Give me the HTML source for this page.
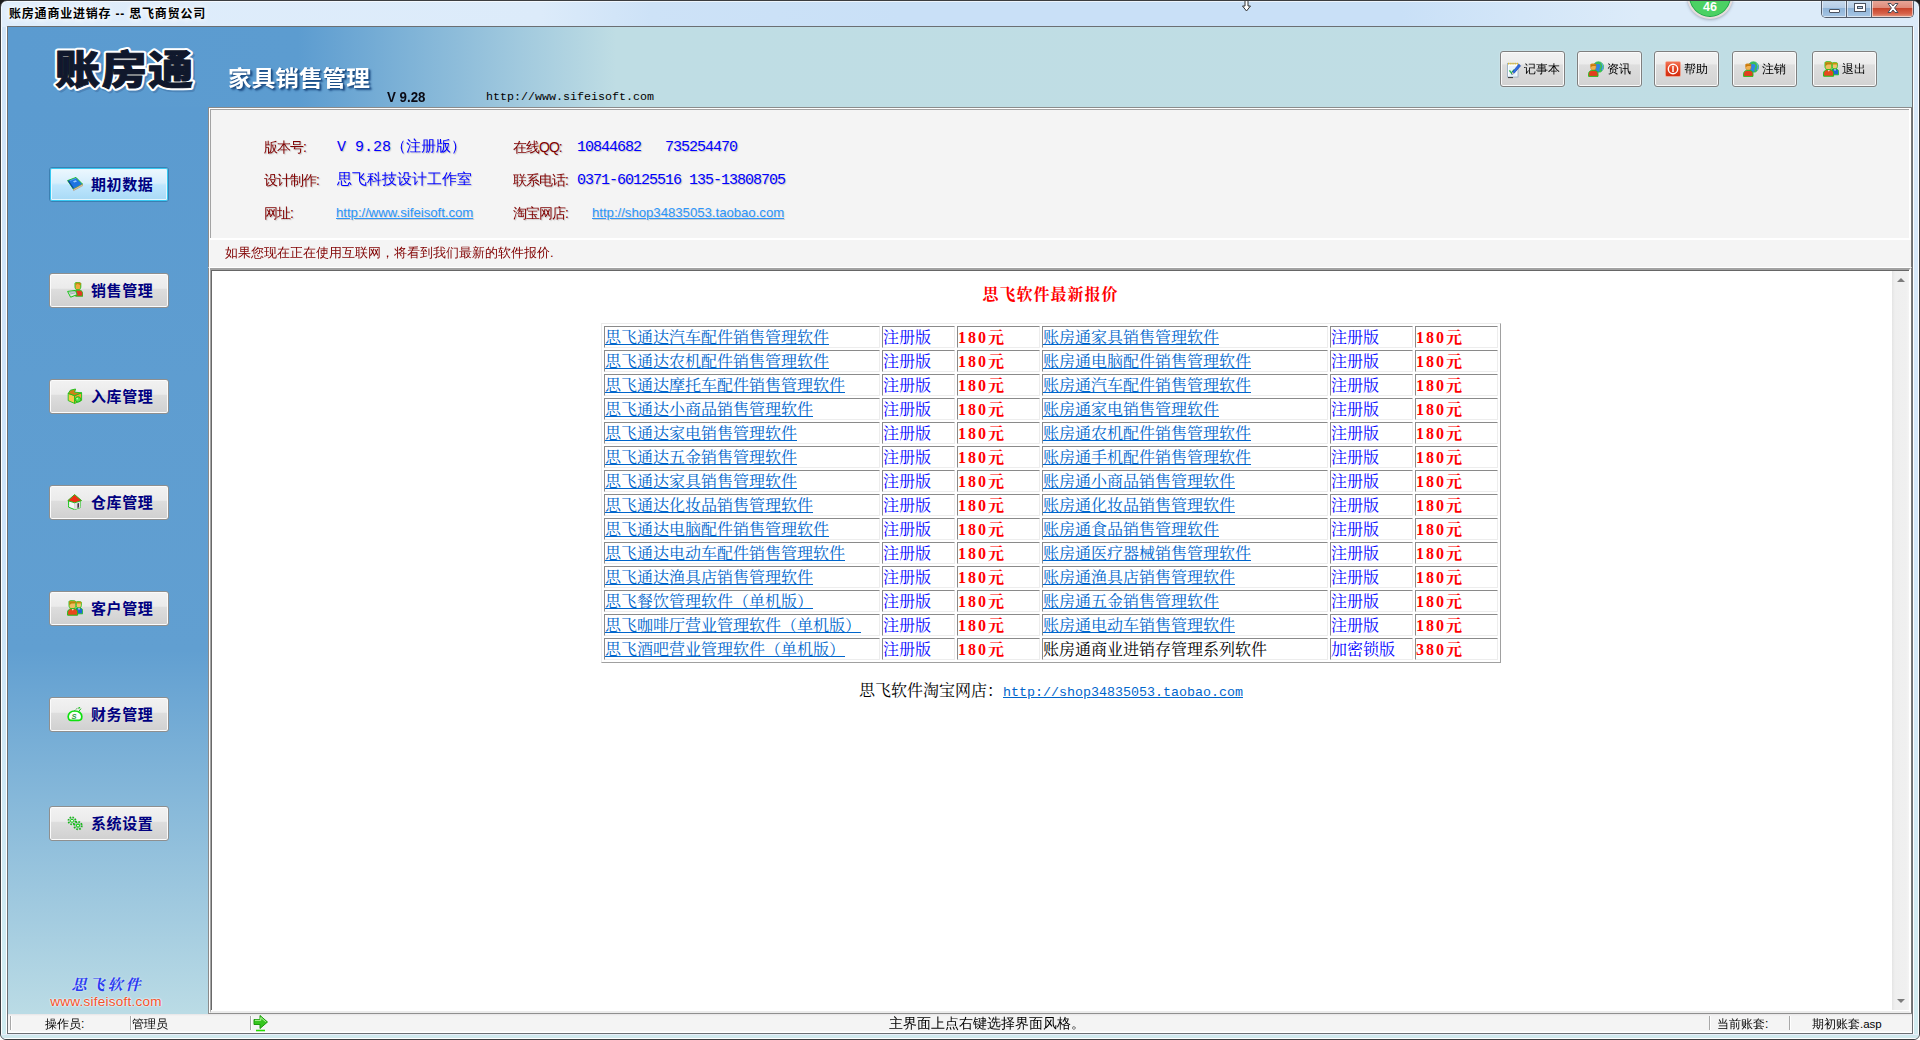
<!DOCTYPE html>
<html lang="zh-CN">
<head>
<meta charset="utf-8">
<title>账房通商业进销存 -- 思飞商贸公司</title>
<style>
html,body{margin:0;padding:0;overflow:hidden}
html{background:linear-gradient(180deg,#1b1b1b 0,#1b1b1b 520px,#fff 520px)}
body{width:1920px;height:1040px;position:relative;font-family:"Liberation Sans","WenQuanYi Zen Hei","Noto Sans CJK SC",sans-serif;font-size:12px;color:#000}
.abs{position:absolute}
#win{position:absolute;left:0;top:0;width:1918px;height:1038px;border:1px solid #3b3d40;border-radius:7px 7px 6px 6px;
 background:linear-gradient(90deg,#dfedfb 0,#dcebfa 540px,#cde2f7 650px,#c9e0f7 900px,#c9e0f7 1400px,#d3e6f8 1520px,#dcebf9 1640px,#dcebf9 100%);overflow:hidden;box-shadow:inset 0 0 0 1px rgba(255,255,255,.65)}
#frameL{left:0;top:26px;width:6px;height:1008px;background:linear-gradient(90deg,#fff 0,#fff 1px,transparent 1px,transparent 5px,#fff 5px),linear-gradient(180deg,#d2e5f8 0,#cfe5fa 50%,#d0ecf0 100%)}
#frameR{left:1912px;top:26px;width:6px;height:1008px;background:linear-gradient(90deg,#fff 0,#fff 1px,transparent 1px,transparent 5px,#fff 5px),linear-gradient(180deg,#d8e8f8 0,#d4e8fa 50%,#d2ecf0 100%)}
#frameB{left:0;top:1033px;width:1918px;height:5px;background:linear-gradient(180deg,#e8eef8 0,#e8eef8 1px,#d0e9ee 1px,#d0e9ee 4px,#fff 4px)}
#titletext{left:8px;top:6px;letter-spacing:.8px;font:bold 12px/15px "Liberation Sans","Noto Sans CJK SC",sans-serif;color:#000;white-space:nowrap;text-shadow:0 0 6px #fff,0 0 6px #fff}
#client{left:6px;top:25px;width:1904px;height:1006px;border:1px solid #6b6f73;background:#c0dde4;overflow:hidden}
/* client coordinates: page x-7, page y-26 */
#hdr{left:0;top:0;width:1904px;height:80px;background:linear-gradient(90deg,#5b9bd0 0,#5c9cd0 290px,#bfdde4 608px,#c0dde4 100%)}
#side{left:0;top:80px;width:200px;height:907px;background:linear-gradient(180deg,#5b9bd0 0,#619fd1 543px,#badbe5 905px)}
/* info panel */
#info{left:200px;top:80px;width:1704px;height:133px;background:#f4f4f4;box-sizing:border-box;border-top:1px solid #8b8b8b;border-left:1px solid #8b8b8b;border-right:1px solid #7a7a7a}
#info:before{content:"";position:absolute;left:0;top:0;right:0;bottom:0;border-top:1px solid #fff;border-left:1px solid #fff;border-right:2px solid #fff;border-bottom:2px solid #fff}
#info:after{content:"";position:absolute;left:1px;top:1px;right:2px;bottom:2px;border-top:1px solid #a3a3a3;border-left:1px solid #a3a3a3}
#notice{left:200px;top:213px;width:1704px;height:28px;background:#f4f4f4;box-sizing:border-box;border-left:1px solid #8b8b8b;border-right:1px solid #7a7a7a;border-bottom:1px solid #fff}
#notice:before{content:"";position:absolute;left:0;top:0;width:1px;height:28px;background:#fff}
#notice span{position:absolute;left:16px;top:5px;color:#800000;font:13px/15px "Liberation Sans","WenQuanYi Zen Hei","Noto Sans CJK SC",sans-serif;white-space:nowrap}
#web{left:200px;top:241px;width:1704px;height:746px;background:#fff;box-sizing:border-box;border-left:1px solid #8b8b8b;border-right:1px solid #7a7a7a;border-bottom:1px solid #8f8f8f}
#web:before{content:"";position:absolute;left:0;top:0;width:1px;height:100%;background:#fff}
#webin{left:1px;top:0;width:1701px;height:745px;box-sizing:border-box;border-top:2px solid #a2a2a2;border-left:1px solid #a4a4a4;border-right:2px solid #fff;border-bottom:2px solid #ececec;background:#fff}
#webin2{left:0;top:0;width:1698px;height:740px;box-sizing:border-box;border-top:1px solid #666;border-left:1px solid #696969;background:#fff;overflow:hidden}
.lbl{position:absolute;color:#800000;letter-spacing:-1px;font:14px/15px "Liberation Sans","WenQuanYi Zen Hei","Noto Sans CJK SC",sans-serif;white-space:nowrap;text-shadow:1px 1px 1px #c8c8c8}
.val{position:absolute;color:#0000ff;font:15px/17px "Liberation Mono","WenQuanYi Zen Hei","Noto Sans CJK SC",monospace;white-space:nowrap;text-shadow:1px 1px 1px #c4c4c4}
.val.num{font-size:15px;letter-spacing:-1px}
.lnk{position:absolute;color:#2b95fb;font:13.15px/15px "Liberation Sans",sans-serif;text-decoration:underline;white-space:nowrap;text-shadow:1px 1px 1px #d0d0d0}

#webin2{font-family:"Liberation Serif","Noto Serif CJK SC",serif;font-size:16px}
.wtitle{position:absolute;left:0;top:14px;width:1677px;text-align:center;color:#ff0000;font:bold 16px/20px "Liberation Serif","Noto Serif CJK SC",serif;letter-spacing:1px}
table.pt{position:absolute;left:389px;top:52px;width:900px;table-layout:fixed;border-collapse:separate;border-spacing:2px;border:1px solid;border-color:#ececec #a0a0a0 #a0a0a0 #ececec;box-sizing:border-box}
table.pt td{height:19px;padding:1px 0 0 0;border:1px solid;border-color:#8a8a8a #ededed #ededed #8a8a8a;font:16px/19px "Liberation Serif","Noto Serif CJK SC",serif;white-space:nowrap;overflow:hidden;color:#000}
table.pt a,.wfoot a{color:#0066cc;text-decoration:underline}
table.pt td.v{color:#0000ff}
table.pt td.p{color:#ff0000;font-weight:bold;letter-spacing:2px}
.wfoot{position:absolute;left:647px;top:410px;white-space:nowrap;font:16px/20px "Liberation Serif","Noto Serif CJK SC",serif;color:#000}
.wfoot a{font:13.33px/20px "Liberation Mono",monospace}
.vsb{position:absolute;left:1680px;top:0;width:17px;height:739px;background:linear-gradient(90deg,#e4e4e4 0,#efefef 3px,#f0f0f0 14px,#f4f4f4 17px)}
.vsb i{position:absolute;left:5px;width:0;height:0;border-left:4px solid transparent;border-right:4px solid transparent}
.vsb i.up{top:7px;border-bottom:4px solid #7c7c7c}
.vsb i.dn{bottom:7px;border-top:4px solid #7c7c7c}

.sbtn{position:absolute;left:41px;width:120px;height:35px;box-sizing:border-box;border:1px solid #8e8f8f;border-radius:3px;background:linear-gradient(180deg,#f2f2f2 0,#ebebeb 43%,#dddddd 47%,#d0d0d0 100%);box-shadow:inset 0 0 0 1px #fbfbfb}
.sbtn.sel{border-color:#3c7fb1;background:linear-gradient(180deg,#eef8fe 0,#d6eefc 45%,#bee6fd 52%,#a7d9f5 100%);box-shadow:inset 0 0 0 1px #35c8f2,inset 0 0 0 2px #e6f6fd}
.sbtn .ic{position:absolute;left:17px;top:8px;width:16px;height:16px}
.sbtn .tx{position:absolute;left:41px;top:8px;letter-spacing:.6px;color:#000080;font:bold 15px/18px "Liberation Sans","Noto Sans CJK SC",sans-serif;white-space:nowrap}
.tbtn{position:absolute;top:24px;width:65px;height:36px;box-sizing:border-box;border:1px solid #7f7f7f;border-radius:3px;background:linear-gradient(180deg,#f2f2f2 0,#ececec 35%,#dedede 38%,#d2d2d2 100%);box-shadow:inset 0 0 0 1px #fafafa,0 0 2px rgba(255,255,255,.5)}
.tbtn .ic{position:absolute;top:9px;width:16px;height:16px}
.tbtn .tx{position:absolute;top:10px;font:12px/14px "Liberation Sans","WenQuanYi Zen Hei","Noto Sans CJK SC",sans-serif;white-space:nowrap;color:#000}
.logo{position:absolute;left:39px;top:7px;width:170px;height:70px;overflow:visible}
.logo text{font:900 39.600px "Liberation Sans","Noto Sans CJK SC",sans-serif;letter-spacing:1.5px}
.sub{position:absolute;left:220px;top:39px;font:bold 22px/26px "Liberation Sans","Noto Sans CJK SC",sans-serif;color:#fff;white-space:nowrap;transform:scaleX(1.075);transform-origin:left;text-shadow:2px 2px 2px #1f4f86,1px 1px 1px #1f4f86}
.ver{position:absolute;left:379px;top:62px;font:bold 14px/17px "Liberation Sans",sans-serif;color:#0a0a14;white-space:nowrap;transform:scaleX(.95);transform-origin:left}
.url{position:absolute;left:478px;top:63px;font:11.67px/14px "Liberation Mono",monospace;color:#000;white-space:nowrap}
.sflogo{position:absolute;left:28px;top:949px;width:140px;text-align:center}
.sflogo .c1{font:italic bold 15px/18px "Liberation Serif","Noto Serif CJK SC",serif;color:#2a3af0;letter-spacing:3px;padding-left:3px;text-shadow:0 0 2px #e8f2ff}
.sflogo .c2{font:13.5px/15px "Liberation Sans",sans-serif;color:#f4502a;margin-top:0;letter-spacing:.25px;text-shadow:0 0 2px #fff,0 0 2px #fff}
#status{left:0;top:987px;width:1904px;height:19px;background:linear-gradient(180deg,#e6e4e6 0,#f4f4f4 2px,#f4f4f4 17px,#fff 18px);box-sizing:border-box}
#status span{position:absolute;top:3px;font:12px/14px "Liberation Sans","WenQuanYi Zen Hei","Noto Sans CJK SC",sans-serif;white-space:nowrap;color:#000}
#status span b{font-weight:normal;font-size:11.5px}
#status i.sep{position:absolute;top:2px;width:1px;height:14px;background:#a8a8a8;box-shadow:1px 0 0 #fff}
.gcirc{position:absolute;left:1686px;top:-28px;width:46px;height:46px;box-sizing:border-box;border-radius:50%;background:#4bd163;border:2px solid #e6dcdd;box-shadow:inset 0 0 0 1px #1fa24b,0 1px 3px rgba(90,100,120,.45)}
.gcirc span{position:absolute;left:-2px;width:46px;top:26px;text-align:center;color:#fff;font:bold 12.5px/13px "Liberation Sans",sans-serif}
.capbtns{position:absolute;left:1820px;top:-1px;width:93px;height:18px;border:1px solid #545d6b;border-top:none;border-radius:0 0 5px 5px;box-sizing:border-box;overflow:hidden;display:flex}
.cb{position:relative;height:17px;box-sizing:border-box;border-right:1px solid #545d6b;background:linear-gradient(180deg,#c9dcee 0,#b5cde6 45%,#8fb4d8 50%,#a7c6e4 100%);box-shadow:inset 0 0 0 1px rgba(255,255,255,.55)}
.cb.min{width:25px}.cb.max{width:25px}.cb.cls{flex:1;border-right:none;background:linear-gradient(180deg,#e9a99b 0,#df8b7a 45%,#c8452c 50%,#d8634a 80%,#e29b84 100%)}
.cb.min i{position:absolute;left:7px;top:9px;width:9px;height:2px;background:#fff;border:1px solid #4a5260;border-radius:1px}
.cb.max i{position:absolute;left:8px;top:4px;width:6px;height:3px;border:2px solid #fff;outline:1px solid #4a5260;box-shadow:inset 0 0 0 1px #4a5260}
.cb.cls svg{position:absolute;left:14px;top:2px}
.cursor{position:absolute;left:1240px;top:-1px}
</style>
</head>
<body>
<div id="win">
  <div id="titletext" class="abs">账房通商业进销存 -- 思飞商贸公司</div>
  <div id="frameL" class="abs"></div>
  <div id="frameR" class="abs"></div>
  <div id="frameB" class="abs"></div>
  <div id="client" class="abs">
    <div id="hdr" class="abs"></div>
    <div id="side" class="abs"></div>
    <div id="info" class="abs">
      <span class="lbl" style="left:55px;top:32px">版本号:</span>
      <span class="val" style="left:128px;top:31px">V 9.28（注册版）</span>
      <span class="lbl" style="left:55px;top:65px">设计制作:</span>
      <span class="val" style="left:128px;top:64px">思飞科技设计工作室</span>
      <span class="lbl" style="left:55px;top:98px">网址:</span>
      <a class="lnk" style="left:127px;top:97px">http://www.sifeisoft.com</a>
      <span class="lbl" style="left:304px;top:32px">在线QQ:</span>
      <span class="val num" style="left:368px;top:31px">10844682&nbsp;&nbsp;&nbsp;735254470</span>
      <span class="lbl" style="left:304px;top:65px">联系电话:</span>
      <span class="val num" style="left:368px;top:64px">0371-60125516 135-13808705</span>
      <span class="lbl" style="left:304px;top:98px">淘宝网店:</span>
      <a class="lnk" style="left:383px;top:97px">http://shop34835053.taobao.com</a>
    </div>
    <div id="notice" class="abs"><span>如果您现在正在使用互联网，将看到我们最新的软件报价.</span></div>
    <div id="web" class="abs"><div id="webin" class="abs"><div id="webin2" class="abs">
      <div class="wtitle">思飞软件最新报价</div>
      <table class="pt" cellspacing="2" cellpadding="0"><colgroup><col style="width:276px"><col style="width:73px"><col style="width:83px"><col style="width:286px"><col style="width:83px"><col style="width:83px"></colgroup>
      <tr><td><a>思飞通达汽车配件销售管理软件</a></td><td class="v">注册版</td><td class="p">180元</td><td><a>账房通家具销售管理软件</a></td><td class="v">注册版</td><td class="p">180元</td></tr>
      <tr><td><a>思飞通达农机配件销售管理软件</a></td><td class="v">注册版</td><td class="p">180元</td><td><a>账房通电脑配件销售管理软件</a></td><td class="v">注册版</td><td class="p">180元</td></tr>
      <tr><td><a>思飞通达摩托车配件销售管理软件</a></td><td class="v">注册版</td><td class="p">180元</td><td><a>账房通汽车配件销售管理软件</a></td><td class="v">注册版</td><td class="p">180元</td></tr>
      <tr><td><a>思飞通达小商品销售管理软件</a></td><td class="v">注册版</td><td class="p">180元</td><td><a>账房通家电销售管理软件</a></td><td class="v">注册版</td><td class="p">180元</td></tr>
      <tr><td><a>思飞通达家电销售管理软件</a></td><td class="v">注册版</td><td class="p">180元</td><td><a>账房通农机配件销售管理软件</a></td><td class="v">注册版</td><td class="p">180元</td></tr>
      <tr><td><a>思飞通达五金销售管理软件</a></td><td class="v">注册版</td><td class="p">180元</td><td><a>账房通手机配件销售管理软件</a></td><td class="v">注册版</td><td class="p">180元</td></tr>
      <tr><td><a>思飞通达家具销售管理软件</a></td><td class="v">注册版</td><td class="p">180元</td><td><a>账房通小商品销售管理软件</a></td><td class="v">注册版</td><td class="p">180元</td></tr>
      <tr><td><a>思飞通达化妆品销售管理软件</a></td><td class="v">注册版</td><td class="p">180元</td><td><a>账房通化妆品销售管理软件</a></td><td class="v">注册版</td><td class="p">180元</td></tr>
      <tr><td><a>思飞通达电脑配件销售管理软件</a></td><td class="v">注册版</td><td class="p">180元</td><td><a>账房通食品销售管理软件</a></td><td class="v">注册版</td><td class="p">180元</td></tr>
      <tr><td><a>思飞通达电动车配件销售管理软件</a></td><td class="v">注册版</td><td class="p">180元</td><td><a>账房通医疗器械销售管理软件</a></td><td class="v">注册版</td><td class="p">180元</td></tr>
      <tr><td><a>思飞通达渔具店销售管理软件</a></td><td class="v">注册版</td><td class="p">180元</td><td><a>账房通渔具店销售管理软件</a></td><td class="v">注册版</td><td class="p">180元</td></tr>
      <tr><td><a>思飞餐饮管理软件（单机版）</a></td><td class="v">注册版</td><td class="p">180元</td><td><a>账房通五金销售管理软件</a></td><td class="v">注册版</td><td class="p">180元</td></tr>
      <tr><td><a>思飞咖啡厅营业管理软件（单机版）</a></td><td class="v">注册版</td><td class="p">180元</td><td><a>账房通电动车销售管理软件</a></td><td class="v">注册版</td><td class="p">180元</td></tr>
      <tr><td><a>思飞酒吧营业管理软件（单机版）</a></td><td class="v">注册版</td><td class="p">180元</td><td>账房通商业进销存管理系列软件</td><td class="v">加密锁版</td><td class="p">380元</td></tr>
      </table>
      <div class="wfoot">思飞软件淘宝网店：<a>http://shop34835053.taobao.com</a></div>
      <div class="vsb"><i class="up"></i><i class="dn"></i></div>
    </div></div></div>
    <div class="sbtn sel" style="top:140px"><span class="ic"><svg viewBox="0 0 16 16" width="16" height="16"><path d="M.6 4.600 9 1.400 15.600 8.200 6.400 13.200z" fill="#1f74e0" stroke="#18c418" stroke-width=".9" stroke-linejoin="round"/><path d="M.6 4.600 6.400 13.200 6.400 11.400 2 4.800z" fill="#0d3e9e"/><path d="M6.400 13.200 15.600 8.200 15.600 9.700 6.600 14.600z" fill="#e9cba8" stroke="#b0805a" stroke-width=".5"/><path d="M6 5.300 8.800 4.300 10 5.500 7.200 6.600z" fill="#9cc8ff"/><path d="M3 4.600 9 2.400" stroke="#5da2f5" stroke-width=".8"/></svg></span><span class="tx">期初数据</span></div>
    <div class="sbtn" style="top:246px"><span class="ic"><svg viewBox="0 0 16 16" width="16" height="16"><path d="M8 1.200c0-1 5.800-1.300 5.800.4v3.400c0 1.200-1 2.400-1.600 2.800h-2.600c-.8-.5-1.600-1.600-1.600-2.800z" fill="#f0a83a" stroke="#18c418" stroke-width=".9"/><path d="M8.600.8h5.200v2.400c-1.200.2-2.400-1.200-3-1.200s-1.400.8-2.200.8z" fill="#c08a10"/><path d="M8.600 8.200h4.600c1.400.4 2.600 1.800 2.600 3.400v2.600H8.600z" fill="#e23a22" stroke="#18c418" stroke-width=".9"/><path d="M.6 9.400 8.400 8.400 10.200 12.600 3.600 15.200z" fill="#dfe6e2" stroke="#18c418" stroke-width="1"/><path d="M2.200 10.400 8 9.600M3 12 8.600 10.800" stroke="#8a98a0" stroke-width=".7"/></svg></span><span class="tx">销售管理</span></div>
    <div class="sbtn" style="top:352px"><span class="ic"><svg viewBox="0 0 16 16" width="16" height="16"><path d="M1.200 5.400 7.600 7.600 7.600 15.400 1.200 12.600z" fill="#f7c84a" stroke="#18c418" stroke-width=".9" stroke-linejoin="round"/><path d="M7.600 7.600 14.600 4.800 14.600 12.400 7.600 15.400z" fill="#f2a030" stroke="#18c418" stroke-width=".9" stroke-linejoin="round"/><path d="M1.200 5.400 3.400 2.200 8.600 1 7.600 4.200 14.600 4.800 7.600 7.600z" fill="#cf7f18" stroke="#18c418" stroke-width=".9" stroke-linejoin="round"/><circle cx="11" cy="11.400" r="2.700" fill="#58e048" stroke="#10b010" stroke-width=".8"/><circle cx="10.200" cy="10.600" r=".9" fill="#b8ffa8"/></svg></span><span class="tx">入库管理</span></div>
    <div class="sbtn" style="top:458px"><span class="ic"><svg viewBox="0 0 16 16" width="16" height="16"><path d="M1.600 6.800v6.400l6 2.400 5.600-2V6.800z" fill="#f6f6f6" stroke="#18c418" stroke-width="1" stroke-dasharray="5 0"/><path d="M7.600 9v6.400" stroke="#c4c4c4" stroke-width=".7"/><path d="M7.600 9 13.200 7v6.600l-5.600 2z" fill="#e2e2e2"/><path d="M.8 6.600 7.600.6 14.600 6.600 7.600 8.800z" fill="#ee2e14" stroke="#18c418" stroke-width=".9" stroke-linejoin="round"/><path d="M10.400 9.600 12 9v4.400l-1.600.6z" fill="#4a3a4a"/></svg></span><span class="tx">仓库管理</span></div>
    <div class="sbtn" style="top:564px"><span class="ic"><svg viewBox="0 0 16 16" width="16" height="16"><path d="M9.200 2.200c0-1 5.200-1 5.200.2v3.200c0 1-.8 2-1.400 2.400h-2.400c-.8-.6-1.400-1.400-1.400-2.400z" fill="#f3c070" stroke="#18c418" stroke-width=".8"/><path d="M9.400 1.800h5v1.600c-1.600.4-3.200-.2-5 .4z" fill="#c8960a"/><path d="M9 8h4.800c1.200.4 1.800 1.400 1.800 2.800v3H9z" fill="#1f66d8" stroke="#18c418" stroke-width=".8"/><path d="M11 8.200l1 2 1-2z" fill="#cfe0ff"/><path d="M2 1.600c0-1.400 6.800-1.400 6.800.2v4c0 1.200-1 2.600-1.800 3H4c-.9-.5-2-1.800-2-3z" fill="#f0bc60" stroke="#18c418" stroke-width=".9"/><path d="M2.200 1.200h6.600v2c-2 .6-3 .2-4 .4s-1.600 1.400-2.600 1.400z" fill="#b8860a"/><path d="M.6 15.200v-3c0-1.800 1.400-3 3-3.400h4.200c1.600.4 2.800 1.600 2.800 3.400v3z" fill="#e8481c" stroke="#18c418" stroke-width="1"/><path d="M4.800 9 5.800 10.800 6.800 9z" fill="#f4e8e0"/></svg></span><span class="tx">客户管理</span></div>
    <div class="sbtn" style="top:670px"><span class="ic"><svg viewBox="0 0 16 16" width="16" height="16"><path d="M1.200 10.600c0-3.400 2.600-5.600 6.600-5.600s7 2.200 7 5.600c0 2.400-1.400 3.800-3 3.800H4c-1.600 0-2.800-1.400-2.800-3.800z" fill="#fbfffb" stroke="#0fe00f" stroke-width="1.700"/><path d="M7.200 5 10 2.400 12.400 2" stroke="#3a9a3a" stroke-width=".9" fill="none" stroke-dasharray="1.400 .8"/><path d="M11.800 5.400 14 2.600" stroke="#1fb81f" stroke-width="1" fill="none"/><circle cx="12.400" cy="1.800" r=".8" fill="#12d012"/><text x="4.600" y="13" font-family="Liberation Sans,sans-serif" font-size="7.500" font-weight="bold" font-style="italic" fill="#2c9a3c">S</text></svg></span><span class="tx">财务管理</span></div>
    <div class="sbtn" style="top:779px"><span class="ic"><svg viewBox="0 0 16 16" width="16" height="16"><circle cx="5" cy="5.800" r="3.600" fill="#c9cfd2" stroke="#16b816" stroke-width="1.700" stroke-dasharray="1.500 1.330"/><circle cx="5" cy="5.800" r="1.500" fill="#fff" stroke="#10d010" stroke-width="1"/><circle cx="11" cy="10.600" r="3.800" fill="#bfc6ca" stroke="#16b816" stroke-width="1.800" stroke-dasharray="1.600 1.380"/><circle cx="11" cy="10.600" r="1.500" fill="#fff" stroke="#10d010" stroke-width="1.100"/></svg></span><span class="tx">系统设置</span></div>
    <div class="sflogo"><div class="c1">思飞软件</div><div class="c2">www.sifeisoft.com</div></div>
    <svg class="logo" viewBox="0 0 170 70" width="170" height="70"><g transform="translate(8,0) scale(1.135,1)"><text x="1.500" y="52.500" fill="#3b6a9c" stroke="#3b6a9c" stroke-width="5" stroke-linejoin="round" opacity=".45">账房通</text><text x="0" y="50" fill="#fff" stroke="#fff" stroke-width="5" stroke-linejoin="round">账房通</text><text x="0" y="50" fill="#10182c" stroke="#10182c" stroke-width="1" stroke-linejoin="round">账房通</text></g></svg>
    <div class="sub">家具销售管理</div>
    <div class="ver">V 9.28</div>
    <div class="url">http://www.sifeisoft.com</div>
    <div class="tbtn" style="left:1492px"><span class="ic" style="left:5px"><svg viewBox="0 0 16 18" width="16" height="18"><rect x="1.500" y="2.500" width="10.500" height="13.500" fill="#fafdff" stroke="#9aaec0" stroke-width=".9"/><path d="M2 2.600h10" stroke="#e6c030" stroke-width="1.800" stroke-dasharray="1.300 .9"/><path d="M3 6h7.500M3 8h7.500M3 10h7.500M3 12h7.500M3 14h7.500" stroke="#cfe4f4" stroke-width=".8"/><path d="M3.400 9.400 5.600 12.200 8 8.800" stroke="#38c058" stroke-width="1.500" fill="none"/><path d="M12.800 3.200 14.600 4.800 8 12.400 5.800 13.400 6.400 11z" fill="#2e6ce6" stroke="#1a3c9c" stroke-width=".6"/><path d="M5.800 13.400 6.400 11 8 12.400z" fill="#f4d8a8"/><path d="M2 16.600h5" stroke="#333" stroke-width="1"/></svg></span><span class="tx" style="left:23px">记事本</span></div>
    <div class="tbtn" style="left:1569px"><span class="ic" style="left:10px"><svg viewBox="0 0 16 16" width="16" height="16"><circle cx="10.400" cy="6" r="5.200" fill="#2f86e4" stroke="#18c418" stroke-width=".7"/><path d="M8 2.600c2.400-1.400 5-.2 5.400 2s-1.600 2.600-1.200 4.400c.2 1 .8 1.400.2 2" stroke="#3fc83f" stroke-width="1.500" fill="none"/><path d="M13.600 2.400c1.600 1.600 2 4.400.8 6.400" stroke="#7ab8f8" stroke-width=".8" fill="none"/><path d="M2.600 3.600c0-1.200 5.400-1.200 5.400.2v2.800c0 1-.8 2.200-1.500 2.600H4.200c-.8-.4-1.600-1.600-1.600-2.600z" fill="#f1b050" stroke="#c07818" stroke-width=".5"/><path d="M2.800 3.200h5.200v1.600c-1.600.4-2.400 0-3.200.2s-1.200 1-2 1z" fill="#c8780a"/><path d="M.6 15.400v-2.600c0-1.800 1.200-3 2.800-3.400h3.800c1.600.4 2.800 1.600 2.800 3.400v2.600z" fill="#e2401e" stroke="#18c418" stroke-width=".9"/></svg></span><span class="tx" style="left:29px">资讯</span></div>
    <div class="tbtn" style="left:1646px"><span class="ic" style="left:10px"><svg viewBox="0 0 16 16" width="16" height="16"><defs><linearGradient id="hg" x1="0" y1="0" x2="0" y2="1"><stop offset="0" stop-color="#f4785a"/><stop offset=".5" stop-color="#e2401e"/><stop offset="1" stop-color="#d42c10"/></linearGradient></defs><rect x=".4" y=".4" width="15.200" height="15.200" rx="1.600" fill="url(#hg)" stroke="#f7b8a6" stroke-width=".7"/><circle cx="8" cy="8" r="4.700" fill="none" stroke="#fff" stroke-width="1.400"/><path d="M8 5v6" stroke="#fff" stroke-width="1.500"/></svg></span><span class="tx" style="left:29px">帮助</span></div>
    <div class="tbtn" style="left:1724px"><span class="ic" style="left:10px"><svg viewBox="0 0 16 16" width="16" height="16"><circle cx="10.400" cy="6" r="5.200" fill="#2f86e4" stroke="#18c418" stroke-width=".7"/><path d="M8 2.600c2.400-1.400 5-.2 5.400 2s-1.600 2.600-1.200 4.400c.2 1 .8 1.400.2 2" stroke="#3fc83f" stroke-width="1.500" fill="none"/><path d="M13.600 2.400c1.600 1.600 2 4.400.8 6.400" stroke="#7ab8f8" stroke-width=".8" fill="none"/><path d="M2.600 3.600c0-1.200 5.400-1.200 5.400.2v2.800c0 1-.8 2.200-1.500 2.600H4.200c-.8-.4-1.600-1.600-1.600-2.600z" fill="#f1b050" stroke="#c07818" stroke-width=".5"/><path d="M2.800 3.200h5.200v1.600c-1.600.4-2.400 0-3.200.2s-1.200 1-2 1z" fill="#c8780a"/><path d="M.6 15.400v-2.600c0-1.800 1.200-3 2.800-3.400h3.800c1.600.4 2.800 1.600 2.800 3.400v2.600z" fill="#e2401e" stroke="#18c418" stroke-width=".9"/></svg></span><span class="tx" style="left:29px">注销</span></div>
    <div class="tbtn" style="left:1804px"><span class="ic" style="left:10px"><svg viewBox="0 0 16 16" width="16" height="16"><path d="M9.200 2.200c0-1 5.200-1 5.200.2v3.200c0 1-.8 2-1.400 2.400h-2.400c-.8-.6-1.400-1.400-1.400-2.400z" fill="#f3c070" stroke="#18c418" stroke-width=".8"/><path d="M9.400 1.800h5v1.600c-1.600.4-3.200-.2-5 .4z" fill="#c8960a"/><path d="M9 8h4.800c1.200.4 1.800 1.400 1.800 2.800v3H9z" fill="#1f66d8" stroke="#18c418" stroke-width=".8"/><path d="M11 8.200l1 2 1-2z" fill="#cfe0ff"/><path d="M2 1.600c0-1.400 6.800-1.400 6.800.2v4c0 1.200-1 2.600-1.800 3H4c-.9-.5-2-1.800-2-3z" fill="#f0bc60" stroke="#18c418" stroke-width=".9"/><path d="M2.200 1.200h6.600v2c-2 .6-3 .2-4 .4s-1.600 1.400-2.600 1.400z" fill="#b8860a"/><path d="M.6 15.200v-3c0-1.800 1.400-3 3-3.400h4.200c1.600.4 2.800 1.600 2.800 3.400v3z" fill="#e8481c" stroke="#18c418" stroke-width="1"/><path d="M4.800 9 5.800 10.800 6.800 9z" fill="#f4e8e0"/></svg></span><span class="tx" style="left:29px">退出</span></div>
    <div id="status" class="abs">
      <i class="sep" style="left:2px"></i><span style="left:37px">操作员:</span>
      <i class="sep" style="left:122px"></i><span style="left:124px">管理员</span>
      <i class="sep" style="left:242px"></i><span class="arrow" style="left:245px;top:0px"><svg viewBox="0 0 16 18" width="16" height="18"><path d="M1 5.500h6V1.500l7.500 6.500L7 14.500v-4H1z" fill="#35c61e" stroke="#1a9a0a" stroke-width="1"/><path d="M2 6.300h5.800V3.500l5 4.300" fill="none" stroke="#b8f7a0" stroke-width="1"/><path d="M3 16.500h9" stroke="#22dd00" stroke-width="1.600"/></svg></span>
      <span style="left:881px;top:1px;font-size:14px;line-height:16px">主界面上点右键选择界面风格。</span>
      <i class="sep" style="left:1701px"></i><span style="left:1709px">当前账套:</span>
      <i class="sep" style="left:1781px"></i><span style="left:1804px">期初账套<b>.asp</b></span>
    </div>
  </div>
  <div class="gcirc"><span>46</span></div>
  <div class="capbtns"><div class="cb min"><i></i></div><div class="cb max"><i></i></div><div class="cb cls"><svg viewBox="0 0 14 12" width="14" height="12"><path d="M2 1.500 5 1.500 7 4 9 1.500 12 1.500 8.600 6 12 10.500 9 10.500 7 8 5 10.500 2 10.500 5.400 6z" fill="#fff" stroke="#4a4f5a" stroke-width="1"/></svg></div></div>
  <svg class="cursor" viewBox="0 0 11 12" width="11" height="12"><path d="M4 0v6H1.500L5.500 11 9.500 6H7V0" fill="#fff" stroke="#333" stroke-width="1"/></svg>
</div>
</body>
</html>
